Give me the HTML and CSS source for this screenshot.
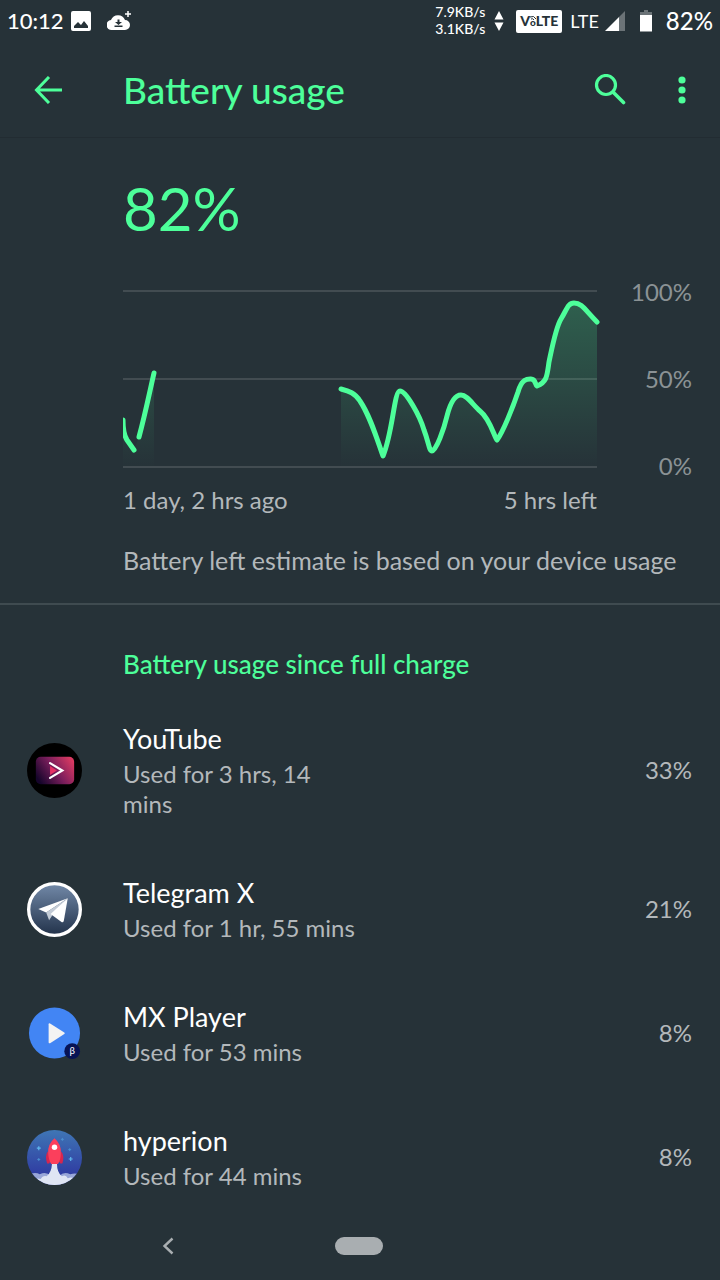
FILE: index.html
```html
<!DOCTYPE html>
<html lang="en">
<head>
  <meta charset="utf-8">
  <meta name="viewport" content="width=device-width, initial-scale=1">
  <title>Battery usage</title>
  <link rel="stylesheet" href="styles.css">
</head>
<body>
  <div class="status-bar">
    <span class="clock">10:12</span>
    <svg class="photo-icon" width="20" height="20" viewBox="0 0 20 20">
      <path fill="#fff" fill-rule="evenodd" d="M2 0h16a2 2 0 0 1 2 2v16a2 2 0 0 1-2 2H2a2 2 0 0 1-2-2V2a2 2 0 0 1 2-2zM3 17h14v-2l-4-5-3 4-3-3-4 4z"/>
    </svg>
    <svg class="cloud-icon" width="24" height="20" viewBox="0 0 24 20">
      <path fill="#fff" d="M5 19a5 5 0 0 1-1-10 7.500 7.500 0 0 1 14 0 5 5 0 0 1 0 10z"/>
      <path fill="#263238" d="M10.500 8.500h2V11H15l-3.500 3L8 11h2.500zM7.500 14.500h8V16h-8z"/>
      <path stroke="#fff" stroke-width="1.500" d="M21 0v6M18 3h6"/>
    </svg>
    <div class="net-speed">
      <span>7.9KB/s</span>
      <span>3.1KB/s</span>
    </div>
    <svg class="arrows-icon" width="10" height="22" viewBox="0 0 10 22">
      <path fill="#fff" d="M5 1l4.500 8.500h-9zM5 21L.5 12.500h9z"/>
    </svg>
    <span class="volte">V<small>o</small>LTE
      <svg class="volte-wave" width="8" height="6" viewBox="0 0 8 6"><path fill="none" stroke="#263238" d="M1 2q4-2 6 2M2 4q2-1 3 1"/></svg>
    </span>
    <span class="lte">LTE</span>
    <svg class="signal-icon" width="20" height="20" viewBox="0 0 20 20">
      <path fill="#6b7377" d="M20 0v20h-6V6z"/>
      <path fill="#fff" d="M14 6v14H0z"/>
    </svg>
    <svg class="battery-icon" width="12" height="22" viewBox="0 0 12 22">
      <path fill="#6b7377" d="M4 0h4v2h4v5H0V2h4z"/>
      <path fill="#fff" d="M0 5h12v16.500H0z"/>
    </svg>
    <span class="level">82%</span>
  </div>

  <header class="app-bar">
    <button class="icon-button" aria-label="Back">
      <svg width="28" height="28" viewBox="0 0 28 28" fill="none" stroke="#4dff9a" stroke-width="3">
        <path d="M28 14H2M15 1L2.500 14 15 27"/>
      </svg>
    </button>
    <h1>Battery usage</h1>
    <button class="icon-button search-button" aria-label="Search">
      <svg width="32" height="32" viewBox="0 0 32 32" fill="none" stroke="#4dff9a" stroke-linecap="round">
        <circle cx="12" cy="11" r="9.500" stroke-width="3.200"/>
        <path stroke-width="3.600" d="M20 19l9.500 9.500"/>
      </svg>
    </button>
    <button class="icon-button" aria-label="More options">
      <svg width="8" height="28" viewBox="0 0 8 28" fill="#4dff9a">
        <circle cx="4" cy="4" r="3.600"/>
        <circle cx="4" cy="14" r="3.600"/>
        <circle cx="4" cy="24" r="3.600"/>
      </svg>
    </button>
  </header>

  <main>
    <section class="summary">
      <p class="big-level">82%</p>
      <div class="chart-row">
        <svg class="chart" viewBox="0 0 474 178" preserveAspectRatio="none">
          <defs>
            <linearGradient id="fill" gradientUnits="userSpaceOnUse" x1="0" y1="0" x2="0" y2="178">
              <stop offset="0" stop-color="#4dff9a" stop-opacity=".24"/>
              <stop offset="1" stop-color="#4dff9a" stop-opacity="0"/>
            </linearGradient>
            <clipPath id="left-edge"><path d="M0-10h490v200H0z"/></clipPath>
          </defs>
          <path class="grid-line" d="M0 1h474M0 89h474M0 177h474"/>
          <g fill="url(#fill)">
            <path d="M0 130Q0 144 4 149L11 160 16 147 31 83V177H0z"/>
            <path d="M218 99C226 101 232 103 237 111C247 126 253 146 260 166C270 142 271 101 277 101C283 101 297 126 301 140C306 153 306 161 309 161C313 161 321 139 324 126C328 110 333 105 338 105C344 105 350 115 357 121C367 129 371 146 374 150C380 142 390 117 395 102C399 88 405 89 408 89C413 89 412 95 414 96C424 92 424 86 426 72C430 53 433 37 438 29C444 19 445 13 451 13C459 13 462 20 474 32V177H218z"/>
          </g>
          <g class="level-line" clip-path="url(#left-edge)">
            <path d="M0 130Q0 144 4 150L11 160"/>
            <path d="M16 147C22 125 26 105 31 83"/>
            <path d="M218 99C226 101 232 103 237 111C247 126 253 146 260 166C270 142 271 101 277 101C283 101 297 126 301 140C306 153 306 161 309 161C313 161 321 139 324 126C328 110 333 105 338 105C344 105 350 115 357 121C367 129 371 146 374 150C380 142 390 117 395 102C399 88 405 89 408 89C413 89 412 95 414 96C424 92 424 86 426 72C430 53 433 37 438 29C444 19 445 13 451 13C459 13 462 20 474 32"/>
          </g>
        </svg>
        <div class="y-labels">
          <span>100%</span>
          <span>50%</span>
          <span>0%</span>
        </div>
      </div>
      <div class="x-labels">
        <span>1 day, 2 hrs ago</span>
        <span>5 hrs left</span>
      </div>
      <p class="estimate">Battery left estimate is based on your device usage</p>
    </section>

    <section>
      <h2>Battery usage since full charge</h2>
      <ul class="app-list">
        <li class="app">
          <svg class="app-icon" viewBox="0 0 56 56">
            <defs>
              <linearGradient id="yt" x1="0" y1=".7" x2="1" y2=".2">
                <stop offset="0" stop-color="#16052b"/>
                <stop offset=".5" stop-color="#7a1e5c"/>
                <stop offset="1" stop-color="#dc3a62"/>
              </linearGradient>
            </defs>
            <circle cx="28" cy="28" r="28" fill="#000"/>
            <rect x="9" y="14" width="39" height="28" rx="5" fill="url(#yt)"/>
            <path fill="#e53165" d="M23.500 23.500v9l7-4.500z"/>
            <path fill="none" stroke="#fff" stroke-width="2.200" stroke-linecap="round" d="M23.500 20.500l12.500 7.500-12.500 7.500"/>
          </svg>
          <div class="app-text">
            <h3>YouTube</h3>
            <p>Used for 3 hrs, 14<br>mins</p>
          </div>
          <span class="percent">33%</span>
        </li>
        <li class="app">
          <svg class="app-icon" viewBox="0 0 56 56">
            <defs>
              <linearGradient id="tg" x1="0" y1="0" x2="0" y2="1">
                <stop offset="0" stop-color="#7289a8"/>
                <stop offset="1" stop-color="#22324a"/>
              </linearGradient>
            </defs>
            <circle cx="28" cy="28" r="26.300" fill="url(#tg)" stroke="#fff" stroke-width="3.400"/>
            <path fill="#fff" d="M41.500 16.500L11.500 27.500l8 3.500z"/>
            <path fill="#c3cbd6" d="M19.500 31l22-14.500L26 33.500l-3.500 5.500z"/>
            <path fill="#fff" d="M41.500 16.500L24 32.500l11.500 8.500q1.500.5 2-1.500z"/>
          </svg>
          <div class="app-text">
            <h3>Telegram X</h3>
            <p>Used for 1 hr, 55 mins</p>
          </div>
          <span class="percent">21%</span>
        </li>
        <li class="app">
          <svg class="app-icon" viewBox="0 0 56 56">
            <circle cx="28" cy="27.500" r="26" fill="#4285f4"/>
            <path fill="#f3f3f3" d="M22 18.500q0-1.500 1.500-.8L38 27q1 .8 0 1.600l-14.500 9.200q-1.500.7-1.500-.8z"/>
            <circle cx="46" cy="46" r="8" fill="#071355"/>
            <text class="beta" x="46" y="49" text-anchor="middle">β</text>
          </svg>
          <div class="app-text">
            <h3>MX Player</h3>
            <p>Used for 53 mins</p>
          </div>
          <span class="percent">8%</span>
        </li>
        <li class="app">
          <svg class="app-icon" viewBox="0 0 56 56">
            <defs>
              <linearGradient id="sky" x1="0" y1="0" x2="0" y2="1">
                <stop offset="0" stop-color="#3f76b5"/>
                <stop offset="1" stop-color="#2c2f9e"/>
              </linearGradient>
              <clipPath id="disc"><circle cx="28" cy="28" r="28"/></clipPath>
            </defs>
            <g clip-path="url(#disc)">
              <path fill="url(#sky)" d="M0 0h56v56H0z"/>
              <path stroke="#5fb8ee" stroke-width="1.200" d="M12 16.500v4M10 18.500h4M44.500 27.500v4M42.500 29.500h4"/>
              <path stroke="#4a8fd0" d="M36 8v3M34.500 9.500h3M43.500 18.500v3M42 20h3M12 28.500v3M10.500 30h3"/>
              <path fill="#98a6d8" d="M0 46q8-4 13-1 7-3 11 2h9q4-5 11-2 6-2 12 1v10H0z"/>
              <path fill="#dfe5f4" d="M25.500 34h5q0 9 5 13 4-2 6 2 6-2 9 3v6H6v-6q3-4 8-2 2-4 6-3 5-4 5.500-13z"/>
              <path fill="#d6264f" d="M21 22q-3 5-.5 12h2l2-3zM35 22q3.500 5 1 12h-2l-2-3z"/>
              <path fill="#fb3f5c" d="M28 8.500q-7 6-6.500 15 .5 7 3 11h7q3-4 3-11 .5-9-6.500-15z"/>
              <circle cx="28" cy="17.500" r="2.800" fill="#fff"/>
            </g>
          </svg>
          <div class="app-text">
            <h3>hyperion</h3>
            <p>Used for 44 mins</p>
          </div>
          <span class="percent">8%</span>
        </li>
      </ul>
    </section>
  </main>

  <nav class="nav-bar">
    <button class="nav-back" aria-label="Back">
      <svg width="12" height="18" viewBox="0 0 12 18" fill="none" stroke="#a9aeb1" stroke-width="2.400">
        <path d="M10.500 1.500L2.500 9l8 7.500"/>
      </svg>
    </button>
    <button class="nav-home" aria-label="Home"></button>
  </nav>
</body>
</html>
```
FILE: styles.css
```css
* {
  box-sizing: border-box;
  margin: 0;
  padding: 0;
}

body {
  display: flex;
  flex-direction: column;
  min-height: 100vh;
  background: #263238;
  color: #fff;
  font-family: Lato, "Open Sans", sans-serif;
  font-size: 24px;
  line-height: 30px;
}

svg {
  display: block;
  flex: none;
}

button {
  border: 0;
  background: none;
  cursor: pointer;
}

/* status bar */
.status-bar {
  display: flex;
  align-items: center;
  height: 42px;
  padding: 0 7px;
}

.clock {
  font-size: 22px;
  font-weight: 500;
}

.photo-icon {
  margin-left: 7px;
}

.cloud-icon {
  margin-left: 16px;
}

.net-speed {
  display: flex;
  flex-direction: column;
  margin-left: auto;
  padding-bottom: 3px;
  font-size: 14px;
  font-weight: 500;
  line-height: 17px;
  text-align: right;
}

.arrows-icon {
  margin-left: 9px;
}

.volte {
  position: relative;
  width: 46px;
  margin-left: 12px;
  border-radius: 2px;
  background: #fff;
  color: #263238;
  font-size: 14px;
  font-weight: 900;
  line-height: 22px;
  text-align: center;
}

.volte small {
  font-size: 10px;
}

.volte-wave {
  position: absolute;
  top: 5px;
  left: 13px;
}

.lte {
  margin-left: 8px;
  font-size: 18px;
}

.signal-icon {
  margin-left: 6px;
}

.battery-icon {
  margin-left: 15px;
}

.level {
  margin-left: 14px;
  font-weight: 500;
}

/* app bar */
.app-bar {
  display: flex;
  align-items: center;
  height: 96px;
  padding: 0 27px;
  border-bottom: 1px solid #222c32;
}

.icon-button {
  display: flex;
  align-items: center;
  justify-content: center;
  height: 48px;
  padding: 0 7px;
}

.search-button {
  margin-right: 38px;
}

h1 {
  flex: 1;
  margin-left: 54px;
  color: #4dff9a;
  font-size: 37px;
  font-weight: 500;
  line-height: 44px;
}

/* chart */
.summary {
  padding: 34px 28px 28px 123px;
  border-bottom: 2px solid #3f4b50;
  color: #b3b8bb;
}

.big-level {
  color: #4dff9a;
  font-size: 60px;
  line-height: 72px;
}

.chart-row {
  display: flex;
  margin-top: 46px;
}

.chart {
  flex: 1;
  min-width: 0;
  height: 178px;
  overflow: visible;
}

.grid-line {
  stroke: #fff;
  stroke-opacity: .13;
  stroke-width: 2;
}

.level-line {
  fill: none;
  stroke: #4dff9a;
  stroke-width: 5;
  stroke-linecap: round;
  stroke-linejoin: round;
}

.y-labels {
  display: flex;
  flex-direction: column;
  justify-content: space-between;
  width: 95px;
  margin: -13px 0;
  color: #8b9295;
  text-align: right;
}

.x-labels {
  display: flex;
  justify-content: space-between;
  margin: 17px 95px 30px 0;
}

.estimate {
  font-size: 25px;
}

/* app list */
h2 {
  padding: 44px 28px 14px 123px;
  color: #4dff9a;
  font-size: 26px;
  font-weight: 500;
  line-height: 30px;
}

.app-list {
  list-style: none;
}

.app {
  display: flex;
  align-items: center;
  padding: 28px 28px 28px 27px;
}

.app-icon {
  width: 55px;
  height: 55px;
}

.app-text {
  flex: 1;
  margin-left: 41px;
}

h3 {
  margin-bottom: 2px;
  font-size: 27px;
  font-weight: 400;
  line-height: 36px;
}

.app-text p,
.percent {
  color: #b3b8bb;
}

.beta {
  fill: #fff;
  font-size: 10px;
}

/* navigation bar */
.nav-bar {
  display: grid;
  grid-template-columns: 1fr 48px 1fr;
  align-items: center;
  height: 68px;
  margin-top: auto;
  padding: 0 2px 14px 0;
}

.nav-back {
  justify-self: center;
}

.nav-home {
  height: 18px;
  border-radius: 9px;
  background: #a9aeb1;
}
```
